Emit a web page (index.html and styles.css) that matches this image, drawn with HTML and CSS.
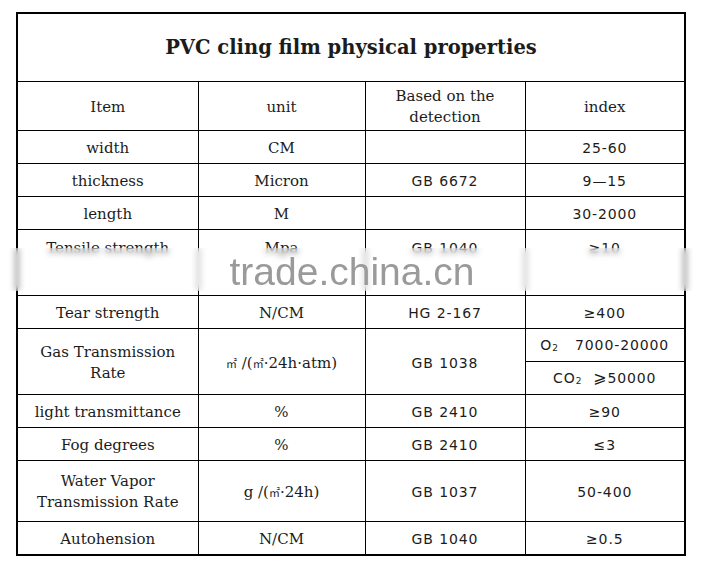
FILE: index.html
```html
<!DOCTYPE html>
<html>
<head>
<meta charset="utf-8">
<link rel="stylesheet" href="styles.css">
</head>
<body>
<div class="page">
  <table class="props">
    <colgroup>
      <col class="c1"><col class="c2"><col class="c3"><col class="c4">
    </colgroup>
    <tr class="title-row"><td colspan="4" class="title">PVC cling film physical properties</td></tr>
    <tr class="head-row">
      <td>Item</td>
      <td>unit</td>
      <td class="tight">Based on the<br>detection</td>
      <td>index</td>
    </tr>
    <tr class="r"><td>width</td><td>CM</td><td class="num"></td><td class="num">25-60</td></tr>
    <tr class="r"><td>thickness</td><td>Micron</td><td class="num">GB 6672</td><td class="num">9—15</td></tr>
    <tr class="r"><td>length</td><td>M</td><td class="num"></td><td class="num">30-2000</td></tr>
    <tr class="tall"><td>Tensile strength</td><td>Mpa</td><td class="num">GB 1040</td><td class="num">≥10</td></tr>
    <tr class="r"><td>Tear strength</td><td>N/CM</td><td class="num">HG 2-167</td><td class="num">≥400</td></tr>
    <tr class="r">
      <td rowspan="2" class="tight">Gas Transmission<br>Rate</td>
      <td rowspan="2" class="unit-sm"><span class="cjk">㎡</span> /(<span class="cjk">㎡</span>·24h·atm)</td>
      <td rowspan="2" class="num">GB 1038</td>
      <td class="num">O<sub>2</sub>&nbsp;&nbsp;&nbsp;7000-20000</td>
    </tr>
    <tr class="r"><td class="num">CO<sub>2</sub>&nbsp;&nbsp;<span class="geq">⩾</span>50000</td></tr>
    <tr class="r"><td>light transmittance</td><td>%</td><td class="num">GB 2410</td><td class="num">≥90</td></tr>
    <tr class="r"><td>Fog degrees</td><td>%</td><td class="num">GB 2410</td><td class="num">≤3</td></tr>
    <tr class="water"><td class="tight">Water Vapor<br>Transmission Rate</td><td>g /(<span class="cjk">㎡</span>·24h)</td><td class="num">GB 1037</td><td class="num">50-400</td></tr>
    <tr class="r"><td>Autohension</td><td>N/CM</td><td class="num">GB 1040</td><td class="num">≥0.5</td></tr>
  </table>
  <div class="watermark"><span class="wm-text">trade.china.cn</span></div>
</div>
</body>
</html>
```
FILE: styles.css
```css
html, body {
  margin: 0;
  padding: 0;
  background: #fff;
}
.page {
  position: relative;
  width: 701px;
  height: 565px;
  padding: 12px 0 0 16px;
  box-sizing: border-box;
}
.props {
  border-collapse: collapse;
  border: 2px solid #000;
  table-layout: fixed;
  width: 669px;
  font-family: "DejaVu Serif", serif;
  font-size: 15px;
  color: #1c1c1c;
}
.c1 { width: 181px; }
.c2 { width: 167px; }
.c3 { width: 160px; }
.c4 { width: 160px; }
.props td {
  border: 1px solid #000;
  text-align: center;
  vertical-align: middle;
  padding: 2px 0 0;
  line-height: 18px;
}
.title-row td { height: 66px; }
.props td.title {
  font-weight: bold;
  font-size: 19.5px;
  padding-top: 1px;
}
.head-row td { height: 46px; }
.r td { height: 30px; }
.props .tall td {
  height: 56px;
  vertical-align: top;
  padding-top: 9px;
}
.water td { height: 58px; }
.props td.tight { line-height: 21px; }
.num {
  font-family: "DejaVu Sans", sans-serif;
  font-size: 14px;
  letter-spacing: 0.9px;
}
.num sub {
  font-size: 9px;
  vertical-align: -1px;
}
.geq { font-size: 16px; }
.cjk {
  font-family: "Noto Sans CJK SC", sans-serif;
  font-size: 11px;
}
.watermark {
  position: absolute;
  left: 0;
  top: 248px;
  width: 701px;
  height: 43px;
  background: rgba(255, 255, 255, 0.25);
  backdrop-filter: blur(3px);
  display: flex;
  justify-content: center;
  align-items: center;
}
.wm-text {
  font-family: "Liberation Sans", Arial, sans-serif;
  font-size: 39px;
  color: #9a9a9a;
  line-height: 1;
  padding-top: 4px;
  margin-left: 3px;
}
```
